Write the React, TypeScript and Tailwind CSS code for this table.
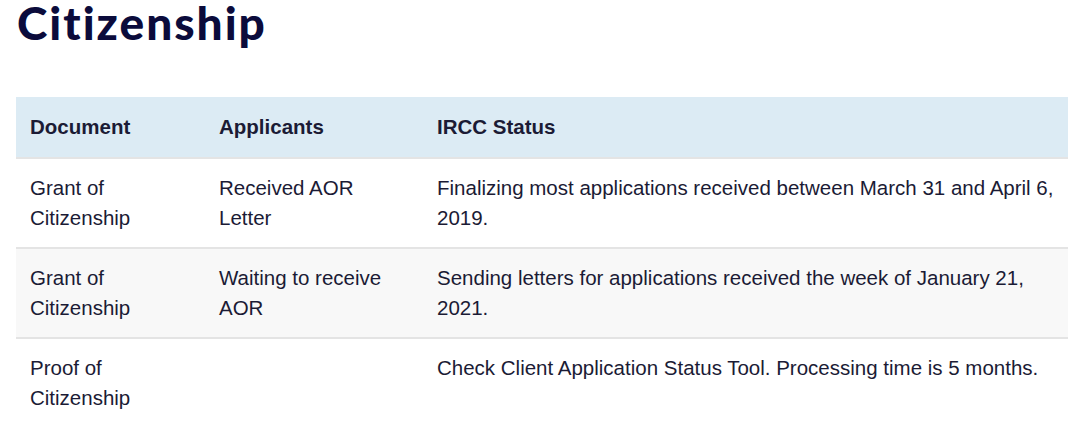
import React from 'react';

const rows = [
  {
    doc: 'Grant of Citizenship',
    applicants: 'Received AOR Letter',
    status: 'Finalizing most applications received between March 31 and April 6, 2019.',
  },
  {
    doc: 'Grant of Citizenship',
    applicants: 'Waiting to receive AOR',
    status: 'Sending letters for applications received the week of January 21, 2021.',
  },
  {
    doc: 'Proof of Citizenship',
    applicants: '',
    status: 'Check Client Application Status Tool. Processing time is 5 months.',
  },
];

export default function App() {
  return (
    <div className="w-[1080px] h-[424px] overflow-hidden bg-white">
      <h1 className="pl-[17px] h-[97px] text-[46px] leading-[46px] font-black text-[#0b0b3b] tracking-[2px] font-['Lato',sans-serif]">
        Citizenship
      </h1>
      <div className="ml-[16px] w-[1052px]">
        <table className="w-full border-collapse text-left text-[20.5px] leading-[30px] text-[#1b1b35] font-['Liberation_Sans',Arial,sans-serif]">
          <thead className="bg-[#dcebf4]">
            <tr className="border-b-2 border-[#e4e4e4]">
              <th className="w-[189px] px-[14px] py-[15px] font-bold">Document</th>
              <th className="w-[218px] px-[14px] py-[15px] font-bold">Applicants</th>
              <th className="px-[14px] py-[15px] font-bold">IRCC Status</th>
            </tr>
          </thead>
          <tbody>
            {rows.map((row, i) => (
              <tr key={i} className={`border-b-2 border-[#e4e4e4] align-top ${i % 2 === 1 ? 'bg-[#f8f8f8]' : 'bg-white'}`}>
                <td className="w-[189px] pl-[14px] py-[14px] pr-[40px]">{row.doc}</td>
                <td className="w-[218px] pl-[14px] py-[14px] pr-[30px]">{row.applicants}</td>
                <td className="px-[14px] py-[14px]">{row.status}</td>
              </tr>
            ))}
          </tbody>
        </table>
      </div>
    </div>
  );
}
